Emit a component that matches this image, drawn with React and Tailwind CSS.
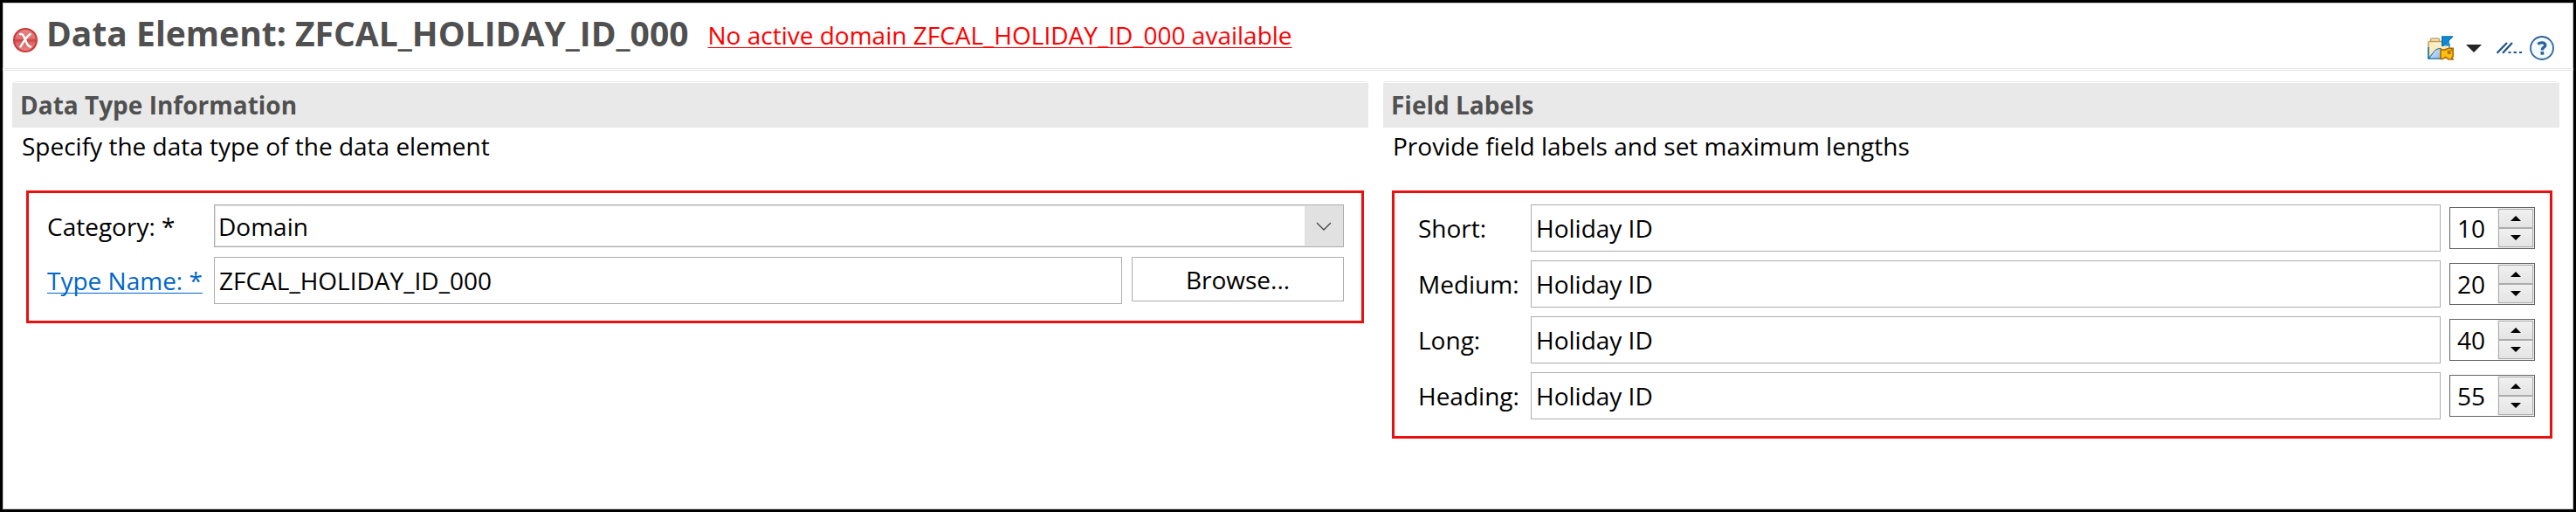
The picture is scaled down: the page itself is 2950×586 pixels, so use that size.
import React, { useState } from "react";

const fieldClass =
  "h-[54px] w-full min-w-0 border border-[#abadb3] bg-white pl-[5px] text-black outline-none";

const linkClass =
  "whitespace-nowrap underline decoration-1 underline-offset-[3px] [text-decoration-skip-ink:none]";

function ErrorIcon() {
  return (
    <svg viewBox="0 0 28 28" className="size-7 shrink-0" aria-hidden="true">
      <defs>
        <linearGradient id="errorFill" x1="0" y1="0" x2="0" y2="1">
          <stop offset="0" stopColor="#e88585" />
          <stop offset="0.42" stopColor="#e07272" />
          <stop offset="0.5" stopColor="#cf4444" />
          <stop offset="0.62" stopColor="#dc6868" />
          <stop offset="1" stopColor="#e88585" />
        </linearGradient>
      </defs>
      <circle cx="14" cy="14" r="13" fill="url(#errorFill)" stroke="#c83a36" strokeWidth="2" />
      <path
        d="M8 7c3-.6 4 1.500 6 6.500s3 8 6 8M19.500 7c-3 2.500-8.500 10-11 14.500"
        fill="none"
        stroke="#fff"
        strokeWidth="2.400"
        strokeLinecap="round"
      />
    </svg>
  );
}

function FolderIcon() {
  return (
    <svg viewBox="0 0 30 28" className="h-7 w-[30px]" aria-hidden="true">
      <defs>
        <linearGradient id="folderFill" x1="0" y1="0" x2="0" y2="1">
          <stop offset="0" stopColor="#fdf3d3" />
          <stop offset="1" stopColor="#fbdf94" />
        </linearGradient>
        <linearGradient id="folderFront" x1="0" y1="0" x2="1" y2="1">
          <stop offset="0" stopColor="#e4eefc" />
          <stop offset="1" stopColor="#8fb6ee" />
        </linearGradient>
      </defs>
      <path d="M3.500 7V4.500Q3.500 3 5 3h7q1.500 0 1.500 1.500V7" fill="#f6e6c8" stroke="#c9a367" strokeWidth="1.500" />
      <path d="M1 14V8q0-1.500 1.500-1.500H24.500V15L14 26H1z" fill="url(#folderFill)" />
      <path d="M1 14V8q0-1.500 1.500-1.500H16" fill="none" stroke="#c79b4d" strokeWidth="1.500" />
      <path d="M25 9v6" stroke="#3a83a8" strokeWidth="1.500" />
      <path d="M1 13v13h14V15q-4-.5-6.500 2.500L2 25.500" fill="none" stroke="#0f72ae" strokeWidth="1.700" />
      <path d="M2.500 25.200L8.500 17.500q2.500-3 6.500-2.500v10.200z" fill="url(#folderFront)" />
      <path d="M16.500.800H29L18.500 11.500h-2z" fill="#0a8bd3" stroke="#0668a5" strokeWidth="1" />
      <path d="M19.500 11.500L25 5.500v6z" fill="#0a8bd3" />
      <path
        d="M15 15.200q3.500 2 7-.200l2.500-.800h4.700v9.500l-1.500 1.300 1.500 2h-5l-3.500-2.500-3.200 2H15z"
        fill="#fdc010"
        stroke="#ad6c00"
        strokeWidth="1.600"
      />
      <path d="M29 14.500L23.500 20m0-3.500V20H27" fill="none" stroke="#ad6c00" strokeWidth="1.500" />
    </svg>
  );
}

function LinesIcon() {
  return (
    <svg viewBox="0 0 30 14" className="h-3.5 w-[30px]" aria-hidden="true">
      <path d="M.5 12.800L12 1M7 12.800L18 1" fill="none" stroke="#1c5288" strokeWidth="2.200" />
      <path d="M13.500 12h3M19.500 12h3.500M26 12h3" stroke="#1c5a96" strokeWidth="2" />
    </svg>
  );
}

function HelpIcon() {
  return (
    <svg viewBox="0 0 28 28" className="size-7" aria-hidden="true">
      <circle cx="14" cy="14" r="13" fill="#f4fafe" stroke="#2c659b" strokeWidth="1.800" />
      <path
        d="M9.300 9.300q2.200-1.500 4.800-1.400 3.900.200 3.700 2.900-.1 1.400-1.800 2.400-1.700 1-1.700 3.200"
        fill="none"
        stroke="#2c659b"
        strokeWidth="3.400"
      />
      <rect x="12.500" y="18" width="3.700" height="3.700" fill="#2c659b" />
    </svg>
  );
}

function Section({ id, title, description, children }) {
  return (
    <section aria-labelledby={id} className="min-w-0">
      <div className="rounded-t-sm border-t border-[#e9e9e9] pt-px">
        <h2 id={id} className="h-[51px] bg-[#e9e9e9] pl-[9px] text-[28px] leading-[51px] font-bold text-[#505050]">
          {title}
        </h2>
      </div>
      <p className="h-[71px] pl-[11px] leading-[42px]">{description}</p>
      {children}
    </section>
  );
}

function Spinner({ label, value, onChange }) {
  const stepClass =
    "flex min-h-0 flex-1 items-center justify-center border border-[#acacac] bg-linear-to-b from-[#f0f0f0] to-[#e4e4e4]";
  return (
    <div className="flex h-12 border border-[#646464] bg-white">
      <input
        type="number"
        aria-label={label + " maximum length"}
        value={value}
        onChange={(e) => onChange(Number(e.target.value))}
        className="w-full min-w-0 flex-1 [appearance:textfield] pr-[14px] text-right outline-none [&::-webkit-inner-spin-button]:appearance-none"
      />
      <div className="flex w-[42px] shrink-0 flex-col bg-[#f0f0f0] p-px">
        <button type="button" aria-label={"Increase " + label} className={stepClass} onClick={() => onChange(value + 1)}>
          <svg viewBox="0 0 12 6" className="h-1.5 w-3" aria-hidden="true">
            <path d="M0 6L6 0l6 6z" />
          </svg>
        </button>
        <button type="button" aria-label={"Decrease " + label} className={stepClass} onClick={() => onChange(value - 1)}>
          <svg viewBox="0 0 12 6" className="h-1.5 w-3" aria-hidden="true">
            <path d="M0 0l6 6 6-6z" />
          </svg>
        </button>
      </div>
    </div>
  );
}

function LabelRow({ name, length }) {
  const [value, setValue] = useState(length);
  const id = "label-" + name.toLowerCase();
  return (
    <div className="grid grid-cols-[119px_1fr_98px] items-center gap-x-2.5">
      <label htmlFor={id}>{name}:</label>
      <input id={id} type="text" defaultValue="Holiday ID" className={fieldClass} />
      <Spinner label={name} value={value} onChange={setValue} />
    </div>
  );
}

export default function App() {
  return (
    <main className="min-h-screen border-[3px] border-black bg-white font-['Open_Sans','Noto_Sans',sans-serif] text-[28px] text-black shadow-[inset_0_0_0_1px_#c8cac8]">
      <header className="flex h-[76px] items-center border-b border-[#e6e6e6] pr-[22px] pl-3 shadow-[0_1px_0_#fff,0_2px_0_#e6e6e6]">
        <div className="mt-[11px]">
          <ErrorIcon />
        </div>
        <h1 className="mb-1.5 ml-2.5 text-[39px] leading-[56px] font-bold whitespace-nowrap text-[#505050]">
          Data Element: ZFCAL_HOLIDAY_ID_000
        </h1>
        <a href="#problems" className={"mb-px ml-[22px] text-[#ff0000] " + linkClass}>
          No active domain ZFCAL_HOLIDAY_ID_000 available
        </a>
        <div className="mt-[29px] ml-auto flex items-center">
          <button type="button" aria-label="Open with">
            <FolderIcon />
          </button>
          <button type="button" aria-label="Open menu" className="ml-[14px]">
            <svg viewBox="0 0 18 9" className="h-[9px] w-[18px]" aria-hidden="true">
              <path d="M0 0h18L9 9z" fill="#252525" />
            </svg>
          </button>
          <button type="button" aria-label="Show more" className="ml-[17px]">
            <LinesIcon />
          </button>
          <button type="button" aria-label="Help" className="ml-2">
            <HelpIcon />
          </button>
        </div>
      </header>

      <div className="grid grid-cols-[1553fr_1347fr] gap-[17px] pt-[14px] pr-4 pl-[11px]">
        <Section id="type-info" title="Data Type Information" description="Specify the data type of the data element">
          <div className="mt-px mr-[5px] ml-4 grid grid-cols-[191px_1fr] items-center gap-y-[11px] border-[3px] border-[#ea1010] pt-[13px] pr-5 pb-[19px] pl-[21px]">
            <label htmlFor="category">Category: *</label>
            <div className="relative flex border border-[#acacac]">
              <select id="category" defaultValue="Domain" className="h-[47px] w-full appearance-none border border-[#e1e1e1] bg-white pl-[3px] outline-none">
                <option>Domain</option>
                <option>Predefined Type</option>
              </select>
              <span className="pointer-events-none absolute inset-y-0 right-0 flex w-11 items-center justify-center bg-[#e1e1e1]">
                <svg viewBox="0 0 18 10" className="h-2.5 w-[18px]" aria-hidden="true">
                  <path d="M1 1l8 8 8-8" fill="none" stroke="#444" strokeWidth="1.300" />
                </svg>
              </span>
            </div>
            <label htmlFor="type-name">
              <a href="#type" className={"text-[#0066cc] " + linkClass}>
                Type Name: *
              </a>
            </label>
            <div className="flex gap-[11px]">
              <input id="type-name" type="text" defaultValue="ZFCAL_HOLIDAY_ID_000" className={fieldClass} />
              <button type="button" className="h-[51px] w-[243px] shrink-0 border border-[#adadad] bg-white">
                Browse...
              </button>
            </div>
          </div>
        </Section>

        <Section id="field-labels" title="Field Labels" description="Provide field labels and set maximum lengths">
          <div className="mt-px mr-2 ml-[10px] flex flex-col gap-2.5 border-[3px] border-[#ea1010] pt-[13px] pr-[17px] pb-[19px] pl-[27px]">
            <LabelRow name="Short" length={10} />
            <LabelRow name="Medium" length={20} />
            <LabelRow name="Long" length={40} />
            <LabelRow name="Heading" length={55} />
          </div>
        </Section>
      </div>
    </main>
  );
}
